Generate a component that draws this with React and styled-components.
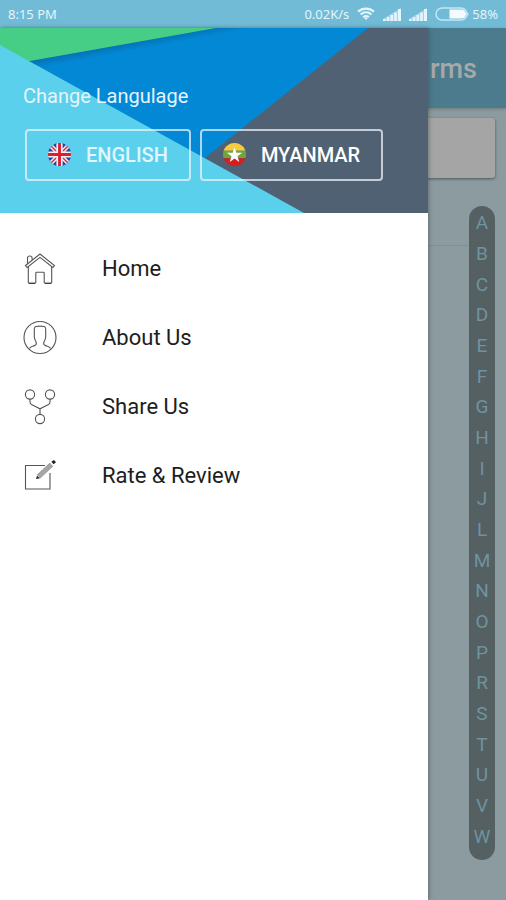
import React from 'react';
import styled, { createGlobalStyle } from 'styled-components';

const letters = 'ABCDEFGHIJLMNOPRSTUVW'.split('');

const GlobalStyle = createGlobalStyle`
	* {
		box-sizing: border-box;
	}
	body {
		margin: 0;
		font-family: Roboto, 'Liberation Sans', sans-serif;
	}
`;

const Screen = styled.div`
	display: flex;
	flex-direction: column;
	min-height: 100vh;
`;

const StatusBar = styled.header`
	display: flex;
	align-items: center;
	justify-content: space-between;
	height: 28px;
	padding: 0 8px 1px;
	background: #72bbd7;
	color: #e4f5fb;
	font-family: 'Noto Sans', sans-serif;
	font-size: 13px;
`;

const StatusGroup = styled.div`
	display: flex;
	align-items: center;
	gap: 8px;
`;

const Battery = styled.div`
	display: flex;
	align-items: center;
	gap: 3px;
`;

const Stage = styled.div`
	position: relative;
	flex: 1;
	display: flex;
	flex-direction: column;
`;

const Page = styled.main`
	flex: 1;
	display: flex;
	flex-direction: column;
	background: #8b9b9f;
`;

const Toolbar = styled.div`
	display: flex;
	align-items: center;
	justify-content: flex-end;
	height: 80px;
	padding: 2px 29px 0 0;
	background: #4b7b8d;
	box-shadow: 0 1px 3px rgba(90, 105, 95, 0.6);
`;

const PageTitle = styled.h1`
	margin: 0;
	font-size: 27px;
	font-weight: 500;
	color: #a6a8a9;
`;

const SearchCard = styled.div`
	height: 60px;
	margin: 10px 11px 0;
	border-radius: 3px;
	background: #a5a5a5;
	box-shadow: 0 1px 3px rgba(50, 60, 60, 0.7);
`;

const ListArea = styled.div`
	flex: 1;
	display: flex;
	padding: 28px 11px 40px;
`;

const List = styled.div`
	flex: 1;
`;

const ListRow = styled.div`
	height: 40px;
	border-bottom: 1px solid #828f91;
`;

const IndexBar = styled.ol`
	display: flex;
	flex-direction: column;
	width: 26px;
	margin: 0;
	padding: 2px 0 8px;
	border-radius: 13px;
	background: #556063;
	list-style: none;
`;

const IndexLetter = styled.li`
	flex: 1;
	display: flex;
	align-items: center;
	justify-content: center;
	font-size: 19px;
	line-height: 20px;
	color: #6f93a0;
`;

const Drawer = styled.aside`
	position: absolute;
	inset: 0 78px 0 0;
	background: #fff;
	box-shadow: 1px 0 4px rgba(60, 70, 70, 0.5);
`;

const DrawerHeader = styled.div`
	position: relative;
	height: 185px;
	padding: 56px 24px 0 23px;
`;

const Backdrop = styled.svg`
	position: absolute;
	inset: 0;
	width: 100%;
	height: 100%;
`;

const HeaderContent = styled.div`
	position: relative;
`;

const HeaderTitle = styled.h2`
	margin: 0;
	font-size: 20px;
	line-height: 24px;
	font-weight: 400;
	color: #e6f5fc;
`;

const LanguageRow = styled.div`
	display: flex;
	gap: 9px;
	padding: 21px 0 0 2px;
`;

const LanguageButton = styled.button`
	display: flex;
	align-items: center;
	gap: 15px;
	height: 52px;
	padding: 0 21px 1px;
	border: 2px solid rgba(235, 242, 250, 0.75);
	border-radius: 4px;
	background: transparent;
	color: ${({ $bright }) => ($bright ? '#fff' : '#e2f6fd')};
	font-family: inherit;
	font-size: 20px;
	font-weight: 500;
`;

const Menu = styled.ul`
	margin: 0;
	padding: 21px 0 0;
	list-style: none;
`;

const MenuLink = styled.a`
	display: flex;
	align-items: center;
	gap: 44px;
	height: 69px;
	padding-left: 22px;
	color: #1d1d1d;
	font-size: 22px;
	text-decoration: none;
`;

const MenuIcon = styled.svg`
	width: 36px;
	height: 36px;
	fill: none;
	stroke: #555;
	stroke-width: 1.1;
`;

const WifiIcon = () => (
	<svg width="18" height="13" viewBox="0 0 18 13" fill="none" stroke="#e4f5fb" strokeWidth="2.2">
		<path d="M1 4.6c4.600-4.100 11.400-4.100 16 0M3.600 7.500c3.200-2.800 7.600-2.800 10.800 0M6.200 10.200c1.700-1.400 3.900-1.400 5.600 0" />
		<path d="M7.300 11.200 9 13 10.700 11.200Q9 10 7.300 11.200Z" fill="#e4f5fb" stroke="none" />
	</svg>
);

const SignalIcon = () => (
	<svg width="18" height="14" viewBox="0 0 18 14" fill="#e4f5fb">
		<path fillOpacity=".45" d="M0 14V12L18 1v13z" />
		<path d="M0 12h2.600v2H0zM3.800 10.300h2.600V14H3.800zM7.500 8h2.600v6H7.500zM11.200 5.500h2.600V14h-2.600zM15 2h3v12h-3z" />
	</svg>
);

const BatteryIcon = () => (
	<svg width="34" height="14" viewBox="0 0 34 14">
		<rect x="1" y="1" width="31" height="12" rx="6" fill="none" stroke="#c4e6f2" strokeWidth="1.500" />
		<path d="M14.500 2.500h12a4.500 4.500 0 0 1 0 9h-12z" fill="#f4fbfd" />
		<path d="M32.500 5q2 2 0 4z" fill="#e4f5fb" />
	</svg>
);

const UkFlag = () => (
	<svg width="23" height="23" viewBox="0 0 24 24">
		<clipPath id="uk">
			<circle cx="12" cy="12" r="12" />
		</clipPath>
		<g clipPath="url(#uk)">
			<path fill="#1b46a5" d="M0 0h24v24H0z" />
			<path stroke="#f3f0f6" strokeWidth="4.500" d="m0 0 24 24M24 0 0 24" />
			<path stroke="#d82c3c" strokeWidth="1.500" d="m0 0 24 24M24 0 0 24" />
			<path stroke="#f3f0f6" strokeWidth="6.500" d="M12 0v24M0 12h24" />
			<path stroke="#d8202f" strokeWidth="3" d="M12 0v24M0 12h24" />
		</g>
	</svg>
);

const MyanmarFlag = () => (
	<svg width="23" height="23" viewBox="0 0 24 24">
		<clipPath id="mm">
			<circle cx="12" cy="12" r="12" />
		</clipPath>
		<g clipPath="url(#mm)">
			<path fill="#f5cc40" d="M0 0h24v8H0z" />
			<path fill="#6da544" d="M0 8h24v8H0z" />
			<path fill="#d31f1f" d="M0 16h24v8H0z" />
		</g>
		<path fill="#fff" d="m12 4.500 1.900 5.800h6.100l-4.900 3.600 1.900 5.800-5-3.500-5 3.500 1.900-5.800L4 10.300h6.100z" />
	</svg>
);

const menuItems = [
	{
		label: 'Home',
		icon: (
			<>
				<path d="M3.500 14.500 18 3 32.500 14.500l-1.600 2L18 6.400 5.100 16.500z" />
				<path d="M5.500 12.500V7q0-2 2.300-2t2.300 2v1.800" />
				<path d="M6.300 16v15.300q0 1 1 1h5.500q1 0 1-1V22q0-.8.8-.8h6.800q.8 0 .8.8v9.300q0 1 1 1h5.500q1 0 1-1V16" />
				<path stroke="#333" d="M7 32.300h6M23 32.300h6" />
			</>
		),
	},
	{
		label: 'About Us',
		icon: (
			<>
				<circle cx="18" cy="17.500" r="16" />
				<path d="M7.500 28.500c1-2.500 2-2 4.500-2.600 2-.5 2.500-1.400 2.300-3-.2-1.500-1.800-3-2-5.900V9.500q0-2.500 1.400-3 4.300-.8 8.600 0 1.400.5 1.400 3V17c-.2 2.900-1.800 4.400-2 5.900-.2 1.600.3 2.500 2.300 3 2.500.6 3.500.1 4.500 2.600" />
			</>
		),
	},
	{
		label: 'Share Us',
		icon: (
			<>
				<circle cx="8" cy="5.500" r="4.600" />
				<circle cx="28" cy="5.500" r="4.600" />
				<circle cx="18" cy="30" r="4.600" />
				<path d="M8 10v3q0 2 2 2.800l8 4 8-4q2-.8 2-2.800v-3M18 19.800v5.600" />
			</>
		),
	},
	{
		label: 'Rate & Review',
		icon: (
			<>
				<path d="M23 7.500H3.500v23.500H28V15" />
				<path stroke="#a6a6a6" strokeWidth="4" d="m16.500 18.500 13-12" />
				<path stroke="#777" strokeWidth=".7" d="M15 17.200 28 5M18 20.200 31 8" />
				<path fill="#222" stroke="none" d="m14 21 1-3.300 3 2.600zM29.300 3.800 32 2l2 2.200-2.400 2z" />
			</>
		),
	},
];

const App = () => {
	return (
		<Screen>
			<GlobalStyle />
			<StatusBar>
				<span>8:15 PM</span>
				<StatusGroup>
					<span>0.02K/s</span>
					<WifiIcon />
					<SignalIcon />
					<SignalIcon />
					<Battery>
						<BatteryIcon />
						<span>58%</span>
					</Battery>
				</StatusGroup>
			</StatusBar>
			<Stage>
				<Page>
					<Toolbar>
						<PageTitle>rms</PageTitle>
					</Toolbar>
					<SearchCard />
					<ListArea>
						<List>
							<ListRow />
						</List>
						<IndexBar>
							{letters.map((letter) => (
								<IndexLetter key={letter}>{letter}</IndexLetter>
							))}
						</IndexBar>
					</ListArea>
				</Page>
				<Drawer>
					<DrawerHeader>
						<Backdrop viewBox="0 0 428 185" preserveAspectRatio="none">
							<defs>
								<linearGradient id="fold" gradientUnits="userSpaceOnUse" x1="123" y1="16" x2="124.500" y2="24">
									<stop offset="0" stopColor="#0672b4" />
									<stop offset="1" stopColor="#0288d4" />
								</linearGradient>
							</defs>
							<path fill="#4f6172" d="M0 0h428v185H0z" />
							<path fill="url(#fold)" d="M0 0h368L205 130 0 130z" />
							<path fill="#46ce87" d="M0 0h216L30 33 0 33z" />
							<path fill="#5ad0ed" d="M0 17 304 185H0z" />
						</Backdrop>
						<HeaderContent>
							<HeaderTitle>Change Langulage</HeaderTitle>
							<LanguageRow>
								<LanguageButton type="button">
									<UkFlag />
									ENGLISH
								</LanguageButton>
								<LanguageButton type="button" $bright>
									<MyanmarFlag />
									MYANMAR
								</LanguageButton>
							</LanguageRow>
						</HeaderContent>
					</DrawerHeader>
					<nav>
						<Menu>
							{menuItems.map(({ label, icon }) => (
								<li key={label}>
									<MenuLink href="#">
										<MenuIcon viewBox="0 0 36 36">{icon}</MenuIcon>
										{label}
									</MenuLink>
								</li>
							))}
						</Menu>
					</nav>
				</Drawer>
			</Stage>
		</Screen>
	);
};

export default App;
